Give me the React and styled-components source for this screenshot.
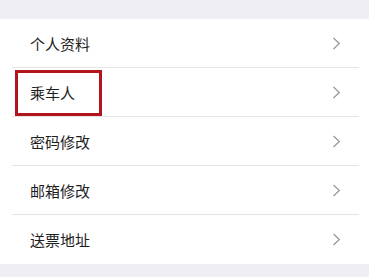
import React from "react";
import styled, { createGlobalStyle } from "styled-components";

const GlobalStyle = createGlobalStyle`
  html, body {
    margin: 0;
    padding: 0;
    background: #efeff3;
    font-family: "Liberation Sans", "Noto Sans CJK SC", sans-serif;
  }
`;

const Page = styled.div`
  width: 369px;
  height: 277px;
  padding-top: 19px;
  box-sizing: border-box;
  background: #efeff3;
`;

const List = styled.ul`
  list-style: none;
  margin: 0;
  padding: 0 10px 0 12px;
  background: #ffffff;
`;

const Row = styled.li`
  position: relative;
  height: 49px;
  padding: 0 18px;
  display: flex;
  align-items: center;
  justify-content: space-between;
  border-bottom: ${(p) => (p.$last ? "none" : "1px solid #e4e4e6")};
  box-sizing: border-box;
`;

const Label = styled.span`
  font-size: 15px;
  color: #1e1e1e;
`;

const Highlight = styled.div`
  position: absolute;
  left: 3px;
  top: 2px;
  width: 87px;
  height: 46px;
  border: 3px solid #b3141b;
  box-sizing: border-box;
`;

const Chevron = () => (
  <svg width="9" height="13" viewBox="0 0 9 13">
    <path d="M1.5 1 L7.3 6.5 L1.5 12" fill="none" stroke="#9a9a9a" strokeWidth="1.3" />
  </svg>
);

const items = ["个人资料", "乘车人", "密码修改", "邮箱修改", "送票地址"];

export default function App() {
  return (
    <Page>
      <GlobalStyle />
      <List>
        {items.map((t, i) => (
          <Row key={t} $last={i === items.length - 1}>
            <Label>{t}</Label>
            <Chevron />
            {i === 1 && <Highlight />}
          </Row>
        ))}
      </List>
    </Page>
  );
}
